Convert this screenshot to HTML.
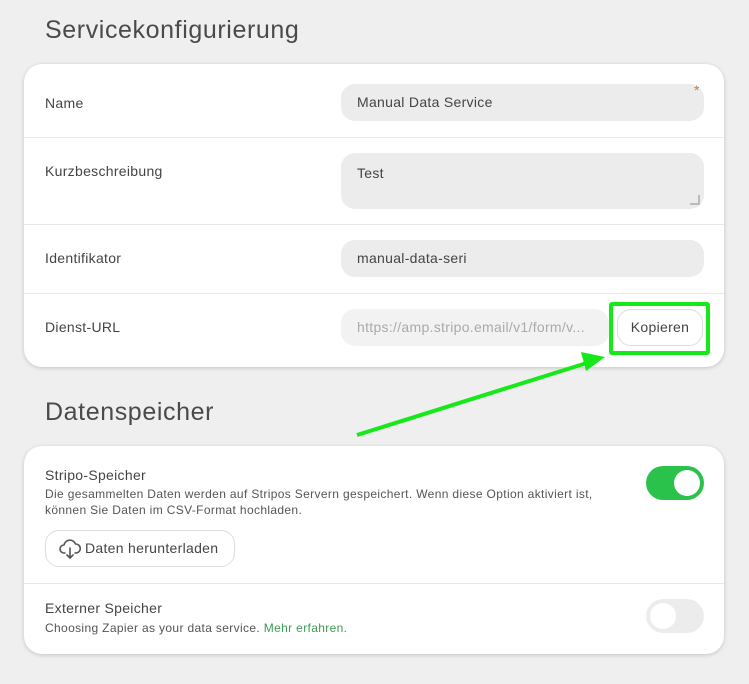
<!DOCTYPE html>
<html><head><meta charset="utf-8"><style>
*{box-sizing:border-box;margin:0;padding:0}
body{width:749px;height:684px;background:#efefef;font-family:"Liberation Sans",sans-serif;color:#444;position:relative;overflow:hidden;letter-spacing:0.3px}
h2{position:absolute;left:45px;font-weight:normal;font-size:25px;color:#4a4a4a;letter-spacing:0.6px}
.card{position:absolute;left:24px;width:700px;background:#fff;border-radius:18px;box-shadow:0 1px 4px rgba(0,0,0,.18)}
.sep{position:absolute;left:0;right:0;height:1px;background:#e8e8e8}
.lbl{position:absolute;left:21px;font-size:14px;color:#444}
.inp{position:absolute;left:317px;width:363px;background:#ececec;border-radius:14px;font-size:14px;color:#444;padding-left:16px}
.t{position:absolute;font-size:14px}
.s{position:absolute;left:21px;font-size:12px;color:#555;line-height:16px;letter-spacing:0.35px}
</style></head><body>
<h2 style="top:16px">Servicekonfigurierung</h2>
<div class="card" style="top:64px;height:303px">
  <div class="lbl" style="top:31px">Name</div>
  <div class="inp" style="top:20px;height:37px;line-height:37px">Manual Data Service</div>
  <div style="position:absolute;left:670px;top:18px;color:#c27a3c;font-size:14px">*</div>
  <div class="sep" style="top:73px"></div>
  <div class="lbl" style="top:99px">Kurzbeschreibung</div>
  <div class="inp" style="top:89px;height:56px;padding-top:12px">Test</div>
  <div style="position:absolute;left:666px;top:131px;width:10px;height:10px;border-right:2px solid #bbb;border-bottom:2px solid #bbb"></div>
  <div class="sep" style="top:160px"></div>
  <div class="lbl" style="top:186px">Identifikator</div>
  <div class="inp" style="top:176px;height:37px;line-height:37px">manual-data-seri</div>
  <div class="sep" style="top:229px"></div>
  <div class="lbl" style="top:255px">Dienst-URL</div>
  <div class="inp" style="top:245px;height:37px;line-height:37px;width:268px;color:#aaa;background:#f2f2f2">https://amp.stripo.email/v1/form/v...</div>
  <div style="position:absolute;left:593px;top:245px;width:86px;height:37px;border:1.5px solid #ddd;border-radius:14px;text-align:center;line-height:34px;font-size:14px;color:#444">Kopieren</div>
</div>
<div style="position:absolute;left:609px;top:302px;width:101px;height:53px;border:4px solid #17e81a;border-radius:3px"></div>
<svg style="position:absolute;left:0;top:0" width="749" height="684"><line x1="357" y1="435" x2="590" y2="362" stroke="#17e81a" stroke-width="4"/><polygon points="605,357 581,352 586,371" fill="#17e81a"/></svg>
<h2 style="top:398px">Datenspeicher</h2>
<div class="card" style="top:446px;height:208px">
  <div class="t" style="left:21px;top:21px">Stripo-Speicher</div>
  <div class="s" style="top:40px">Die gesammelten Daten werden auf Stripos Servern gespeichert. Wenn diese Option aktiviert ist,<br>können Sie Daten im CSV-Format hochladen.</div>
  <div style="position:absolute;left:21px;top:84px;width:190px;height:37px;border:1.5px solid #ddd;border-radius:14px;font-size:14px;line-height:34px;padding-left:39px">Daten herunterladen</div>
  <svg style="position:absolute;left:35px;top:93px" width="22" height="20" viewBox="0 0 22 20" fill="none" stroke="#555" stroke-width="1.6" stroke-linecap="round" stroke-linejoin="round"><path d="M6 14H5a4 4 0 0 1 0-8 6 6 0 0 1 11.5-1A4.5 4.5 0 0 1 17 14h-1"/><path d="M11 9v10M8 16l3 3 3-3"/></svg>
  <div style="position:absolute;left:622px;top:20px;width:58px;height:34px;border-radius:17px;background:#2bc24c"><div style="position:absolute;right:4px;top:4px;width:26px;height:26px;border-radius:50%;background:#fff"></div></div>
  <div class="sep" style="top:137px"></div>
  <div class="t" style="left:21px;top:154px">Externer Speicher</div>
  <div class="s" style="top:174px">Choosing Zapier as your data service. <span style="color:#3f9a55">Mehr erfahren.</span></div>
  <div style="position:absolute;left:622px;top:153px;width:58px;height:34px;border-radius:17px;background:#ececec"><div style="position:absolute;left:4px;top:4px;width:26px;height:26px;border-radius:50%;background:#fff"></div></div>
</div>
</body></html>
